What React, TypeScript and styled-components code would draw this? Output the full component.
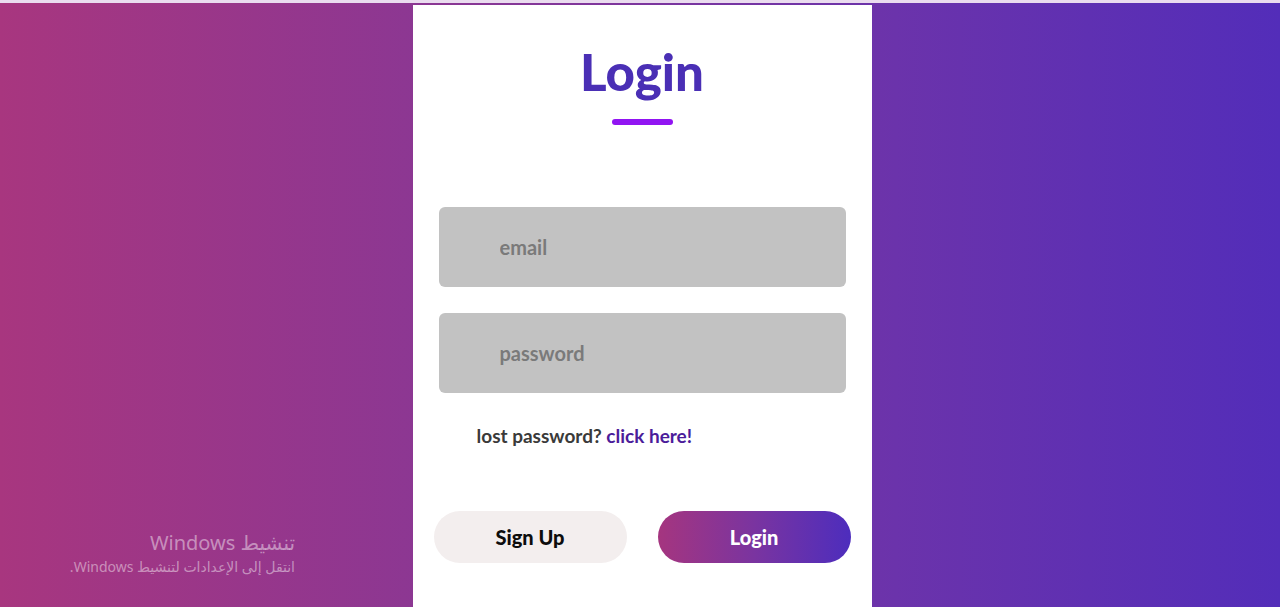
import React from "react";
import styled, { createGlobalStyle } from "styled-components";

const GlobalStyle = createGlobalStyle`
  html, body {
    margin: 0;
    padding: 0;
  }
  body {
    font-family: Lato, "Open Sans", sans-serif;
    overflow: hidden;
  }
`;

const Page = styled.div`
  position: relative;
  height: 607px;
  box-sizing: border-box;
  padding: 5px 0 0 4px;
  display: flex;
  justify-content: center;
  background: linear-gradient(90deg, #a8367f 0%, #8a3794 35%, #6b33ab 70%, #532db9 100%);
  border-top: 3px solid #eadcef;
`;

const Card = styled.main`
  width: 459px;
  margin-top: -3px;
  background: #ffffff;
  box-sizing: border-box;
  padding: 37px 21px 0;
  display: flex;
  flex-direction: column;
  align-items: center;
`;

const Title = styled.h1`
  margin: 0;
  font-family: Lato, sans-serif;
  font-weight: 900;
  font-size: 51px;
  line-height: 60px;
  color: #4a2fb5;
`;

const Underline = styled.div`
  width: 61px;
  height: 6px;
  border-radius: 3px;
  background: #9114f2;
  margin-top: 17px;
`;

const Fields = styled.div`
  align-self: stretch;
  margin: 82px 5px 0;
  display: flex;
  flex-direction: column;
  gap: 26px;
`;

const Field = styled.input`
  height: 80px;
  box-sizing: border-box;
  border: none;
  border-radius: 6px;
  background: #c2c2c2;
  padding: 0 0 0 61px;
  font-family: Lato, sans-serif;
  font-size: 20px;
  font-weight: 700;
  color: #555;
  outline: none;
  &::placeholder {
    color: #7a7a7a;
  }
`;

const Lost = styled.p`
  align-self: stretch;
  margin: 31px 0 0 43px;
  font-size: 19px;
  font-weight: 700;
  color: #3a3a3a;
`;

const LostLink = styled.a`
  color: #4b1c9a;
  text-decoration: none;
  cursor: pointer;
`;

const Actions = styled.div`
  align-self: stretch;
  margin-top: 64px;
  display: flex;
  justify-content: space-between;
`;

const Button = styled.button<{ $primary?: boolean }>`
  width: 193px;
  height: 52px;
  border: none;
  border-radius: 26px;
  font-family: Lato, sans-serif;
  font-size: 20px;
  font-weight: 900;
  cursor: pointer;
  color: ${(p) => (p.$primary ? "#ffffff" : "#0d0d0d")};
  background: ${(p) =>
    p.$primary ? "linear-gradient(90deg, #a5357f 0%, #7a34a0 50%, #4d2dbd 100%)" : "#f3eeee"};
`;

const Watermark = styled.div`
  position: absolute;
  left: 0;
  top: 527px;
  width: 295px;
  text-align: right;
  direction: rtl;
  font-family: "Noto Sans", "DejaVu Sans", sans-serif;
  color: rgba(255, 255, 255, 0.45);
  pointer-events: none;
`;

const WatermarkTitle = styled.div`
  font-size: 20px;
  line-height: 26px;
`;

const WatermarkSub = styled.div`
  font-size: 14px;
  line-height: 22px;
`;

export default function App() {
  return (
    <>
      <GlobalStyle />
      <Page>
        <Card>
          <Title>Login</Title>
          <Underline />
          <Fields>
            <Field type="email" placeholder="email" />
            <Field type="password" placeholder="password" />
          </Fields>
          <Lost>
            lost password? <LostLink>click here!</LostLink>
          </Lost>
          <Actions>
            <Button>Sign Up</Button>
            <Button $primary>Login</Button>
          </Actions>
        </Card>
        <Watermark>
          <WatermarkTitle>تنشيط Windows</WatermarkTitle>
          <WatermarkSub>انتقل إلى الإعدادات لتنشيط Windows.</WatermarkSub>
        </Watermark>
      </Page>
    </>
  );
}
